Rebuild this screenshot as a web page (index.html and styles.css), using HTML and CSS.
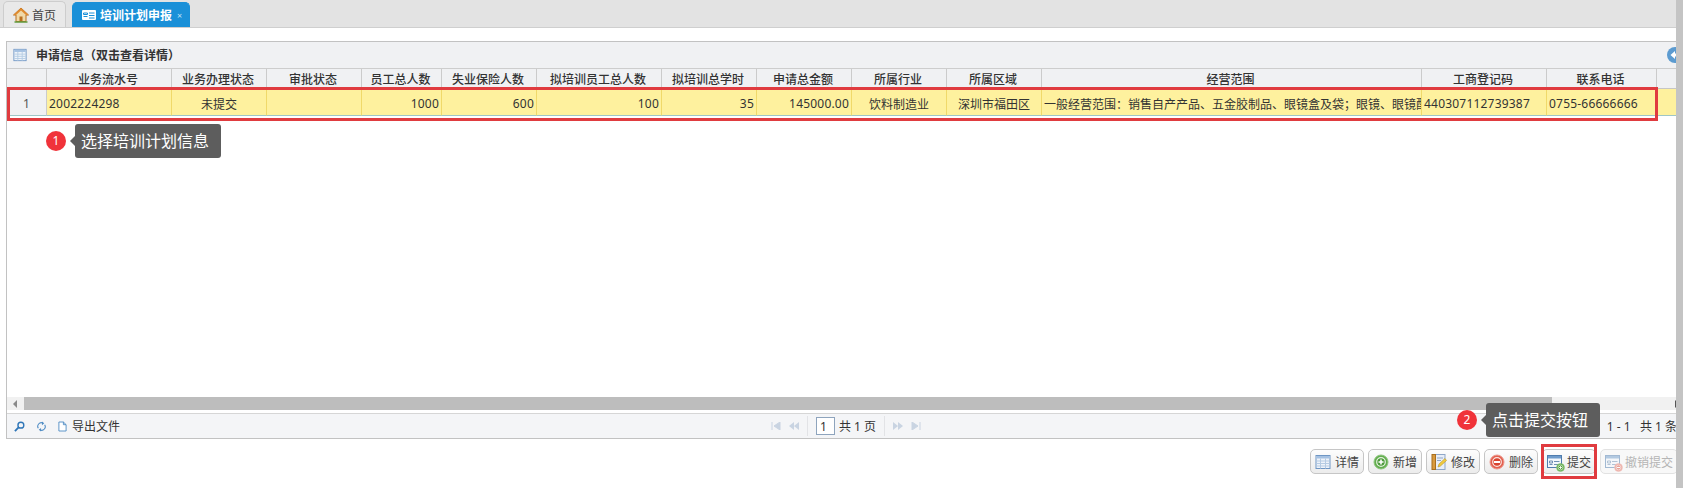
FILE: index.html
```html
<!DOCTYPE html>
<html lang="zh-CN">
<head>
  <meta charset="UTF-8">
  <title>培训计划申报</title>
  <link rel="stylesheet" href="styles.css">
</head>
<body>

  <!-- 图标 -->
  <svg class="defs" width="0" height="0">
    <symbol id="i-table" viewBox="0 0 16 16">
      <rect x="1" y="1.500" width="14" height="13" fill="#eef3fa" stroke="#6f96c4"/>
      <rect x="1.500" y="2" width="13" height="2.500" fill="#a5c1e2"/>
      <path d="M1.500 7h13M1.500 9.500h13M1.500 12h13M5.500 4.500v10M10.500 4.500v10" stroke="#b5cbe3" fill="none"/>
    </symbol>
    <symbol id="i-form" viewBox="0 0 16 16">
      <rect x="0.500" y="1.500" width="14" height="12" fill="#f3f7fc" stroke="#4f7cae"/>
      <rect x="1" y="2" width="13" height="2.500" fill="#6f9bcb"/>
      <path d="M2.500 7h3v2h-3zM2.500 10.500h3M7 7.500h5.500M7 10.500h4" stroke="#6f8fb4" fill="none"/>
    </symbol>
    <symbol id="i-add" viewBox="0 0 16 16">
      <circle cx="8" cy="8" r="7" fill="#62ad4e" stroke="#8dc67d"/>
      <circle cx="8" cy="8" r="4.300" fill="#4c9a3a" stroke="#e8f3e3" stroke-width="1.200"/>
      <path d="M8 5.500v5M5.500 8h5" stroke="#fff" stroke-width="1.600"/>
    </symbol>
    <symbol id="i-del" viewBox="0 0 16 16">
      <circle cx="8" cy="8" r="7" fill="#e2604f" stroke="#ee9a8f"/>
      <circle cx="8" cy="8" r="4.300" fill="#d9432f" stroke="#fbe6e2" stroke-width="1.200"/>
      <path d="M5 8h6" stroke="#fff" stroke-width="2"/>
    </symbol>
    <symbol id="i-edit" viewBox="0 0 16 16">
      <rect x="3" y="0.500" width="11" height="15" fill="#e8eef8" stroke="#8fa7c8"/>
      <rect x="1" y="0.500" width="3.500" height="15" fill="#d99a3e" stroke="#a86f1f"/>
      <path d="M6 4h6M6 6.500h4" stroke="#8fa7c8"/>
      <path d="M7 13l1-3 6-5.500 1.500 2-6 5.500z" fill="#f2cb3c" stroke="#b9962a" stroke-width="0.600"/>
    </symbol>
  </svg>

  <div class="page">
    <div class="tabs">
      <a class="tab">
        <svg class="tab-icon" viewBox="0 0 16 16">
          <path d="M8 1L.5 8h2.500v6.500h10V8h2.500z" fill="#f0d9a8" stroke="#b96f1f"/>
          <path d="M8 1L.5 8h2.500L8 3.500 13 8h2.500z" fill="#e08a2e"/>
          <rect x="6.500" y="9.500" width="3" height="5" fill="#b96f1f"/>
          <path d="M1.500 15h13" stroke="#5f9a3c" stroke-width="1.500"/>
        </svg>
        首页
      </a>
      <a class="tab tab-active">
        <svg class="tab-icon" viewBox="0 0 16 16">
          <rect x="1" y="3" width="14" height="10" rx="1" fill="#fff"/>
          <path d="M2.500 6h4v1.500h-4zM2.500 9.500h4M8 6h5.500M8 8.500h5.500M8 11h5.500" stroke="#1a90d8" fill="none"/>
        </svg>
        培训计划申报
        <span class="tab-close">×</span>
      </a>
    </div>

    <div class="panel">
      <div class="panel-head">
        <svg class="panel-icon"><use href="#i-table"/></svg>
        <span class="panel-title">申请信息（双击查看详情）</span>
        <svg class="panel-toggle" viewBox="0 0 16 16">
          <circle cx="8" cy="8" r="8" fill="#5c9bd0"/>
          <path d="M3.500 8L8 4v2.500h4.500v3H8V12z" fill="#fff"/>
        </svg>
      </div>

      <div class="grid-body">
        <table class="grid">
          <colgroup>
            <col class="c-num"><col class="c-125"><col class="c-95"><col class="c-95"><col class="c-80">
            <col class="c-95"><col class="c-125"><col class="c-95"><col class="c-95"><col class="c-95">
            <col class="c-95"><col class="c-380"><col class="c-125"><col class="c-110"><col>
          </colgroup>
          <thead>
            <tr>
              <th></th>
              <th>业务流水号</th>
              <th>业务办理状态</th>
              <th>审批状态</th>
              <th>员工总人数</th>
              <th>失业保险人数</th>
              <th>拟培训员工总人数</th>
              <th>拟培训总学时</th>
              <th>申请总金额</th>
              <th>所属行业</th>
              <th>所属区域</th>
              <th>经营范围</th>
              <th>工商登记码</th>
              <th>联系电话</th>
              <th class="filler"></th>
            </tr>
          </thead>
          <tbody>
            <tr>
              <td class="row-num">1</td>
              <td class="num">2002224298</td>
              <td class="center">未提交</td>
              <td></td>
              <td class="right num">1000</td>
              <td class="right num">600</td>
              <td class="right num">100</td>
              <td class="right num">35</td>
              <td class="right num">145000.00</td>
              <td class="center">饮料制造业</td>
              <td class="center">深圳市福田区</td>
              <td>一般经营范围：销售自产产品、五金胶制品、眼镜盒及袋；眼镜、眼镜配件</td>
              <td class="num">440307112739387</td>
              <td class="num">0755-66666666</td>
              <td class="filler"></td>
            </tr>
          </tbody>
        </table>
      </div>

      <div class="hscroll">
        <span class="hscroll-left"></span>
        <span class="hscroll-thumb"></span>
        <span class="hscroll-right"></span>
      </div>

      <div class="pager">
        <div class="pager-left">
          <svg class="pg-icon" viewBox="0 0 12 12">
            <circle cx="7.500" cy="4.500" r="3.200" fill="none" stroke="#2f76b8" stroke-width="1.500"/>
            <path d="M5 7L1 11" stroke="#2f76b8" stroke-width="2"/>
          </svg>
          <svg class="pg-icon" viewBox="0 0 12 12">
            <path d="M2.500 8A4 4 0 0 1 7.500 2.200M9.500 4A4 4 0 0 1 4.500 9.800" fill="none" stroke="#4f8cc4" stroke-width="1.100"/>
            <path d="M6.500 .5l2.500 2-2.500 2zM5.500 7.500l-2.500 2 2.500 2z" fill="#4f8cc4"/>
          </svg>
          <span class="pg-export">
            <svg class="pg-doc" viewBox="0 0 10 12">
              <path d="M1 1h5l3 3v7H1zM6 1v3h3" fill="#fff" stroke="#4f8cc4"/>
            </svg>
            导出文件
          </span>
        </div>

        <div class="pager-mid">
          <svg class="pg-nav" viewBox="0 0 10 8"><path d="M1 0v8M9 0v8L3 4z" stroke="#c9d4e2" fill="#c9d4e2"/></svg>
          <svg class="pg-nav" viewBox="0 0 10 8"><path d="M5 0v8L0 4zM10 0v8L5 4z" fill="#c9d4e2"/></svg>
          <i class="pg-sep"></i>
          <span class="pg-input">1</span>
          <span>共 1 页</span>
          <i class="pg-sep"></i>
          <svg class="pg-nav" viewBox="0 0 10 8"><path d="M0 0v8l5-4zM5 0v8l5-4z" fill="#c9d4e2"/></svg>
          <svg class="pg-nav" viewBox="0 0 10 8"><path d="M9 0v8M1 0v8l6-4z" stroke="#c9d4e2" fill="#c9d4e2"/></svg>
        </div>

        <div class="pager-right">1 - 1&nbsp;&nbsp;&nbsp;共 1 条</div>
      </div>

      <!-- 标注 -->
      <div class="mark-row"></div>
      <div class="note note-row">
        <span class="note-dot">1</span>
        <span class="note-text">选择培训计划信息</span>
      </div>
      <div class="note note-submit">
        <span class="note-dot">2</span>
        <span class="note-text">点击提交按钮</span>
      </div>
    </div>

    <div class="toolbar">
      <button class="btn"><svg class="btn-icon"><use href="#i-table"/></svg>详情</button>
      <button class="btn"><svg class="btn-icon"><use href="#i-add"/></svg>新增</button>
      <button class="btn"><svg class="btn-icon"><use href="#i-edit"/></svg>修改</button>
      <button class="btn"><svg class="btn-icon"><use href="#i-del"/></svg>删除</button>
      <button class="btn btn-marked">
        <span class="btn-combo">
          <svg class="btn-icon"><use href="#i-form"/></svg>
          <svg class="btn-badge"><use href="#i-add"/></svg>
        </span>
        提交
      </button>
      <button class="btn btn-off">
        <span class="btn-combo">
          <svg class="btn-icon"><use href="#i-form"/></svg>
          <svg class="btn-badge"><use href="#i-del"/></svg>
        </span>
        撤销提交
      </button>
    </div>
  </div>

  <div class="side-bar"></div>

</body>
</html>
```

FILE: styles.css
```css
* { margin:0; padding:0; box-sizing:border-box; }
html, body { width:100%; height:100%; overflow:hidden; background:#fff; }
body {
  display:flex;
  font-family:"Noto Sans","Noto Sans CJK SC",sans-serif;
  font-size:12px;
  color:#333;
}
.defs { position:absolute; }
.page { flex:1; min-width:0; overflow:hidden; }
.side-bar { width:7px; background:#c4c4c4; }

/* tabs */
.tabs {
  display:flex;
  align-items:flex-end;
  gap:6px;
  height:28px;
  padding-left:3px;
  background:#e3e3e3;
  border-bottom:1px solid #cfcfcf;
}
.tab {
  display:flex;
  align-items:center;
  height:26px;
  width:63px;
  padding-left:9px;
  gap:3px;
  background:#e9e9e9;
  border:1px solid #cdcdcd;
  border-bottom:none;
  border-radius:5px 5px 0 0;
  color:#444;
}
.tab-icon { width:16px; height:16px; }
.tab-active {
  width:118px;
  height:25px;
  padding-left:8px;
  gap:3px;
  background:#1a90d8;
  border-color:#1a90d8;
  color:#fff;
  font-weight:bold;
}
.tab-close { font-size:9px; font-weight:normal; color:#bfe0f5; margin-left:2px; }

/* panel */
.panel {
  position:relative;
  width:1680px;
  margin:13px 0 0 6px;
  border:1px solid #c2c2c2;
}
.panel-head {
  display:flex;
  align-items:center;
  height:27px;
  padding:0 2px 0 6px;
  background:#f0f1f3;
  border-bottom:1px solid #cdcdcd;
}
.panel-icon { width:14px; height:14px; margin-right:9px; }
.panel-title { font-weight:bold; flex:1; }
.panel-toggle { width:16px; height:16px; }

/* grid */
.grid-body { height:328px; }
.grid {
  width:100%;
  table-layout:fixed;
  border-spacing:0;
}
.c-num { width:40px; }
.c-80 { width:80px; }
.c-95 { width:95px; }
.c-110 { width:110px; }
.c-125 { width:125px; }
.c-380 { width:380px; }
.grid th {
  height:20px;
  padding-right:2px;
  font-weight:500;
  background:#f0f1f3;
  border-right:1px solid #cbcbcb;
  border-bottom:1px solid #c6c6c6;
  white-space:nowrap;
}
.grid td {
  height:27px;
  padding:3px 2px 0 2px;
  background:#fef19e;
  border-right:1px solid #f0d96a;
  border-bottom:1px solid #9fc6c6;
  white-space:nowrap;
  overflow:hidden;
}
.grid .row-num { text-align:center; background:#f0f1f3; border-right-color:#cbcbcb; color:#555; }
.grid .filler { border-right:none; }
.grid .num { letter-spacing:.2px; }
.center { text-align:center; }
.right { text-align:right; }

/* scrollbar */
.hscroll {
  display:flex;
  align-items:center;
  height:13px;
  background:#f1f1f1;
}
.hscroll-left { width:17px; }
.hscroll-left::before {
  content:"";
  display:block;
  width:0;
  margin:0 0 0 6px;
  border:4px solid transparent;
  border-left:none;
  border-right:4px solid #8a8a8a;
}
.hscroll-thumb { width:1528px; height:13px; background:#bdbdbd; }
.hscroll-right {
  margin-left:auto;
  margin-right:6px;
  border:4px solid transparent;
  border-right:none;
  border-left:4px solid #555;
}

/* pager */
.pager {
  display:grid;
  grid-template-columns:1fr auto 1fr;
  align-items:center;
  height:25px;
  margin-top:3px;
  background:#f4f5f7;
  border-top:1px solid #d6d6d6;
}
.pager-left { display:flex; align-items:center; gap:11px; padding-left:7px; }
.pg-icon { width:11px; height:11px; }
.pg-export { display:flex; align-items:center; gap:5px; }
.pg-doc { width:9px; height:11px; }
.pager-mid { display:flex; align-items:center; gap:8px; }
.pg-nav { width:10px; height:8px; }
.pg-sep { width:1px; height:20px; background:#e2e3e6; }
.pg-input {
  width:19px;
  height:18px;
  margin-right:-4px;
  padding-left:3px;
  line-height:17px;
  background:#fff;
  border:1px solid #8ea4bd;
}
.pager-right { text-align:right; padding-right:8px; white-space:nowrap; }

/* notes */
.mark-row {
  position:absolute;
  left:0;
  top:45px;
  width:1651px;
  height:34px;
  border:3px solid #e03b3f;
}
.note {
  position:absolute;
  display:flex;
  align-items:center;
  gap:9px;
}
.note-row { left:39px; top:82px; }
.note-submit { left:1450px; top:361px; }
.note-dot {
  width:20px;
  height:20px;
  line-height:20px;
  border-radius:50%;
  background:#f0333a;
  color:#fff;
  text-align:center;
}
.note-text {
  position:relative;
  height:34px;
  padding:0 12px 0 6px;
  line-height:35px;
  font-size:16px;
  color:#fff;
  background:#5d5d5d;
  border-radius:3px;
  white-space:nowrap;
}
.note-text::before {
  content:"";
  position:absolute;
  left:-5px;
  top:12px;
  border:5px solid transparent;
  border-left:none;
  border-right:5px solid #5d5d5d;
}

/* toolbar */
.toolbar {
  display:flex;
  justify-content:flex-end;
  gap:4px;
  margin:10px -2px 0 0;
}
.btn {
  position:relative;
  display:flex;
  align-items:center;
  gap:4px;
  height:25px;
  padding:0 4px;
  font:inherit;
  color:#444;
  background:linear-gradient(#fdfdfd,#ececec);
  border:1px solid #c6c6c6;
  border-radius:5px;
}
.btn-icon { width:16px; height:16px; display:block; }
.btn-combo { position:relative; display:block; width:16px; height:16px; }
.btn-badge { position:absolute; right:-2px; bottom:-2px; width:9px; height:9px; }
.btn-marked::after {
  content:"";
  position:absolute;
  left:-2px;
  right:-2px;
  top:-6px;
  bottom:-6px;
  border:3px solid #e03b3f;
}
.btn-off { color:#b5b5b5; background:#f8f8f8; border-color:#e2e2e2; }
.btn-off .btn-combo { opacity:.5; }
```
